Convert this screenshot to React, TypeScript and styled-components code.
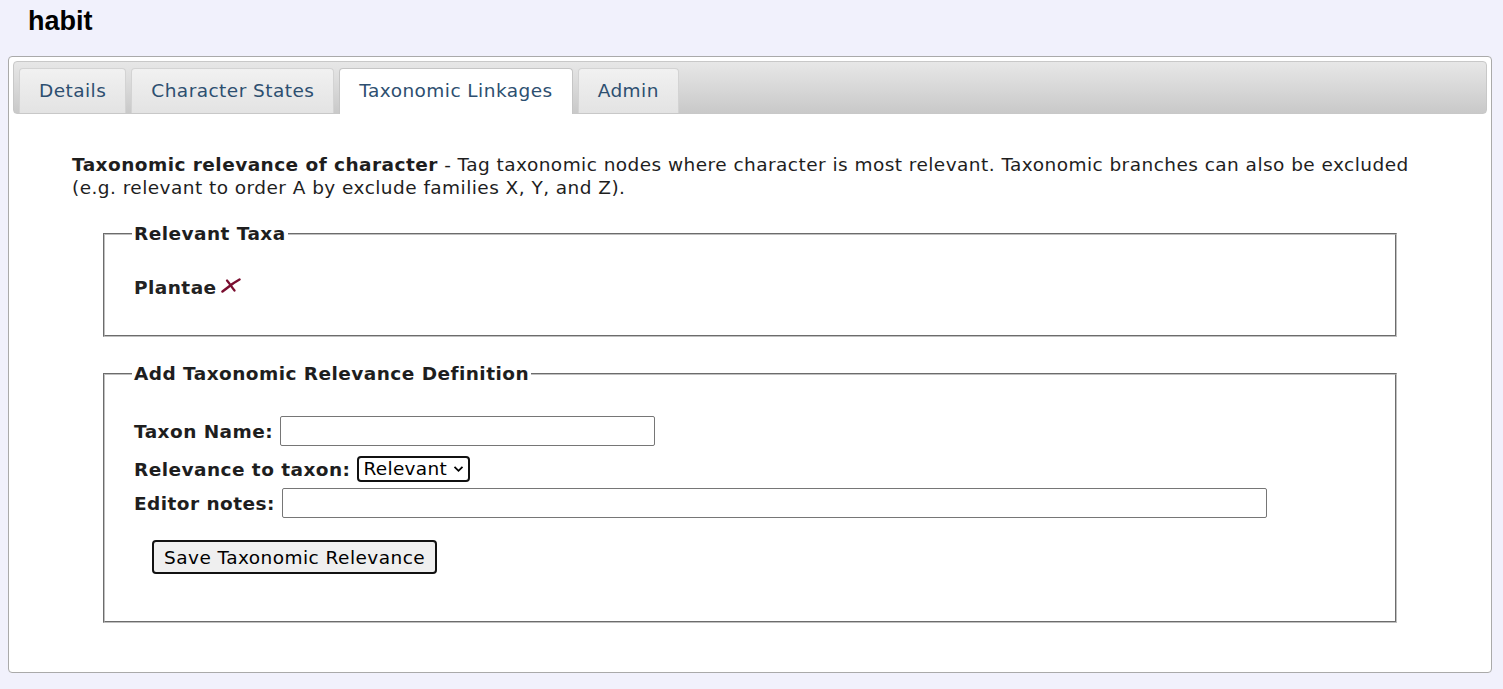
import React from "react";
import styled, { createGlobalStyle } from "styled-components";

const GlobalStyle = createGlobalStyle`
  html, body { margin: 0; padding: 0; }
  body {
    background: #f1f1fc;
    font-family: "DejaVu Sans", Verdana, sans-serif;
    font-size: 18.5px;
    letter-spacing: 0.45px;
    color: #222;
  }
`;

const Page = styled.div`
  padding: 0 11px 16px 8px;
`;

const Heading = styled.h1`
  margin: 0 0 19px 0;
  padding: 5px 0 0 20px;
  font-family: "Liberation Sans", Arial, sans-serif;
  font-size: 27px;
  line-height: 32px;
  font-weight: bold;
  letter-spacing: 0;
  color: #000;
`;

const TabsBox = styled.div`
  background: #fff;
  border: 1px solid #aaaaaa;
  border-radius: 4px;
  padding: 4px 4px 5px;
`;

const TabNav = styled.ul`
  list-style: none;
  margin: 0;
  padding: 6px 5px 0;
  display: flex;
  align-items: flex-end;
  border: 1px solid #c8c8c8;
  border-radius: 4px;
  background: linear-gradient(#e7e7e7, #c9c9c9);
`;

const Tab = styled.li<{ $active?: boolean }>`
  margin: 0 5px ${(p) => (p.$active ? "-1px" : "0")} 0;
  padding: 11px 19px ${(p) => (p.$active ? "12px" : "11px")};
  line-height: 22px;
  border: 1px solid ${(p) => (p.$active ? "#c5c5c5" : "#d3d3d3")};
  border-bottom: none;
  border-radius: 4px 4px 0 0;
  background: ${(p) =>
    p.$active ? "#ffffff" : "linear-gradient(#f1f1f1, #e3e3e3)"};
  color: #2d4f70;
  white-space: nowrap;
  cursor: pointer;
`;

const Panel = styled.div`
  padding: 39px 30px 44px 59px;
`;

const Intro = styled.p`
  margin: 0 0 23px 0;
  line-height: 23px;
  color: #1e1e1e;
`;

const Strong = styled.strong`
  font-weight: bold;
`;

const Fieldset = styled.fieldset<{ $last?: boolean }>`
  margin: 0 60px ${(p) => (p.$last ? "0" : "25px")} 31px;
  padding: 0 27px;
  border: 2px groove #c0c0c0;
  min-width: 0;
`;

const Legend = styled.legend`
  padding: 0 2px;
  font-weight: bold;
  line-height: 23px;
  color: #1e1e1e;
`;

const TaxaList = styled.div`
  padding: 31px 2px 36px;
`;

const TaxonItem = styled.div`
  display: flex;
  align-items: center;
  gap: 4px;
  font-weight: bold;
  line-height: 23px;
`;

const RemoveMark = styled.svg`
  display: block;
  margin-top: -5px;
  cursor: pointer;
`;

const Form = styled.form`
  padding: 31px 2px 47px;
`;

const Row = styled.div<{ $gap: number }>`
  display: flex;
  align-items: center;
  gap: 7px;
  margin-bottom: ${(p) => p.$gap}px;
`;

const Label = styled.label`
  font-weight: bold;
  line-height: 23px;
  white-space: nowrap;
  color: #1e1e1e;
`;

const TextInput = styled.input<{ $width: number }>`
  box-sizing: border-box;
  width: ${(p) => p.$width}px;
  height: 30px;
  border: 1px solid #767676;
  border-radius: 2px;
  background: #fff;
  font-family: inherit;
  font-size: 16px;
  padding: 2px 4px;
`;

const SelectWrap = styled.div`
  position: relative;
  display: inline-block;
`;

const Select = styled.select`
  appearance: none;
  -webkit-appearance: none;
  box-sizing: border-box;
  width: 113px;
  height: 26px;
  padding: 0 20px 0 4px;
  border: 2px solid #111;
  border-radius: 4px;
  background: #fff;
  font-family: "DejaVu Sans", Verdana, sans-serif;
  font-size: 18.5px;
  letter-spacing: 0.3px;
  line-height: 22px;
  color: #000;
`;

const Chevron = styled.svg`
  position: absolute;
  right: 6px;
  top: 9px;
  pointer-events: none;
`;

const SubmitButton = styled.button`
  margin: 0 0 0 18px;
  box-sizing: border-box;
  height: 34px;
  padding: 0 10px;
  border: 2px solid #111;
  border-radius: 4px;
  background: #efefef;
  font-family: "DejaVu Sans", Verdana, sans-serif;
  font-size: 18.5px;
  letter-spacing: 0.45px;
  color: #000;
  cursor: pointer;
`;

export default function App() {
  return (
    <Page>
      <GlobalStyle />
      <Heading>habit</Heading>
      <TabsBox>
        <TabNav>
          <Tab>Details</Tab>
          <Tab>Character States</Tab>
          <Tab $active>Taxonomic Linkages</Tab>
          <Tab>Admin</Tab>
        </TabNav>
        <Panel>
          <Intro>
            <Strong>Taxonomic relevance of character</Strong> - Tag taxonomic
            nodes where character is most relevant. Taxonomic branches can also
            be excluded (e.g. relevant to order A by exclude families X, Y, and
            Z).
          </Intro>
          <Fieldset>
            <Legend>Relevant Taxa</Legend>
            <TaxaList>
              <TaxonItem>
                Plantae
                <RemoveMark width="20" height="15" viewBox="0 0 20 15">
                  <path
                    d="M1.5 13.5 C 5 11, 10 6, 18.5 1.5"
                    stroke="#7a0e30"
                    strokeWidth="2.5"
                    fill="none"
                    strokeLinecap="round"
                  />
                  <path
                    d="M6 2.5 C 9 6, 11 9.5, 13.5 12.5"
                    stroke="#7a0e30"
                    strokeWidth="2.3"
                    fill="none"
                    strokeLinecap="round"
                  />
                </RemoveMark>
              </TaxonItem>
            </TaxaList>
          </Fieldset>
          <Fieldset $last>
            <Legend>Add Taxonomic Relevance Definition</Legend>
            <Form onSubmit={(e) => e.preventDefault()}>
              <Row $gap={10}>
                <Label>Taxon Name:</Label>
                <TextInput type="text" $width={375} />
              </Row>
              <Row $gap={6}>
                <Label>Relevance to taxon:</Label>
                <SelectWrap>
                  <Select defaultValue="relevant">
                    <option value="relevant">Relevant</option>
                    <option value="exclude">Exclude</option>
                  </Select>
                  <Chevron width="11" height="8" viewBox="0 0 11 8">
                    <path
                      d="M1.5 1.8 L5.5 5.8 L9.5 1.8"
                      stroke="#000"
                      strokeWidth="1.8"
                      fill="none"
                    />
                  </Chevron>
                </SelectWrap>
              </Row>
              <Row $gap={22}>
                <Label>Editor notes:</Label>
                <TextInput type="text" $width={985} />
              </Row>
              <SubmitButton type="submit">Save Taxonomic Relevance</SubmitButton>
            </Form>
          </Fieldset>
        </Panel>
      </TabsBox>
    </Page>
  );
}
